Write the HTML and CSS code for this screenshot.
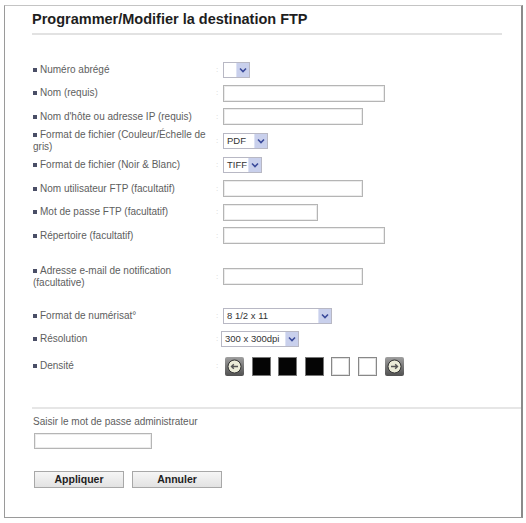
FILE: index.html
```html
<!DOCTYPE html>
<html lang="fr">
<head>
<meta charset="utf-8">
<title>Programmer/Modifier la destination FTP</title>
<link rel="stylesheet" href="styles.css">
</head>
<body>
<div class="frame">
  <h1 class="title">Programmer/Modifier la destination FTP</h1>
  <div class="form">
    <div class="row">
      <div class="label"><span class="bullet"></span>Numéro abrégé</div>
      <div class="colon">:</div>
      <div class="field"><span class="select w27"><span class="val"></span><span class="arrow"><svg width="8" height="6" viewBox="0 0 8 6"><path d="M1 1.5 L4 4.5 L7 1.5" fill="none" stroke="#3a4a9a" stroke-width="1.6"/></svg></span></span></div>
    </div>
    <div class="row">
      <div class="label"><span class="bullet"></span>Nom (requis)</div>
      <div class="colon">:</div>
      <div class="field"><span class="input w162"></span></div>
    </div>
    <div class="row">
      <div class="label"><span class="bullet"></span>Nom d'hôte ou adresse IP (requis)</div>
      <div class="colon">:</div>
      <div class="field"><span class="input w140"></span></div>
    </div>
    <div class="row tall">
      <div class="label"><span class="bullet"></span>Format de fichier (Couleur/Échelle de gris)</div>
      <div class="colon">:</div>
      <div class="field"><span class="select w45"><span class="val">PDF</span><span class="arrow"><svg width="8" height="6" viewBox="0 0 8 6"><path d="M1 1.5 L4 4.5 L7 1.5" fill="none" stroke="#3a4a9a" stroke-width="1.6"/></svg></span></span></div>
    </div>
    <div class="row">
      <div class="label"><span class="bullet"></span>Format de fichier (Noir &amp; Blanc)</div>
      <div class="colon">:</div>
      <div class="field"><span class="select w39"><span class="val">TIFF</span><span class="arrow"><svg width="8" height="6" viewBox="0 0 8 6"><path d="M1 1.5 L4 4.5 L7 1.5" fill="none" stroke="#3a4a9a" stroke-width="1.6"/></svg></span></span></div>
    </div>
    <div class="row">
      <div class="label"><span class="bullet"></span>Nom utilisateur FTP (facultatif)</div>
      <div class="colon">:</div>
      <div class="field"><span class="input w140"></span></div>
    </div>
    <div class="row">
      <div class="label"><span class="bullet"></span>Mot de passe FTP (facultatif)</div>
      <div class="colon">:</div>
      <div class="field"><span class="input w95"></span></div>
    </div>
    <div class="row">
      <div class="label"><span class="bullet"></span>Répertoire (facultatif)</div>
      <div class="colon">:</div>
      <div class="field"><span class="input w162"></span></div>
    </div>
    <div class="row mail">
      <div class="label"><span class="bullet"></span>Adresse e-mail de notification (facultative)</div>
      <div class="colon">:</div>
      <div class="field"><span class="input w140"></span></div>
    </div>
    <div class="row scan">
      <div class="label"><span class="bullet"></span>Format de numérisat°</div>
      <div class="colon">:</div>
      <div class="field"><span class="select w109"><span class="val">8 1/2 x 11</span><span class="arrow"><svg width="8" height="6" viewBox="0 0 8 6"><path d="M1 1.5 L4 4.5 L7 1.5" fill="none" stroke="#3a4a9a" stroke-width="1.6"/></svg></span></span></div>
    </div>
    <div class="row res">
      <div class="label"><span class="bullet"></span>Résolution</div>
      <div class="colon">:</div>
      <div class="field shift"><span class="select w78"><span class="val">300 x 300dpi</span><span class="arrow"><svg width="8" height="6" viewBox="0 0 8 6"><path d="M1 1.5 L4 4.5 L7 1.5" fill="none" stroke="#3a4a9a" stroke-width="1.6"/></svg></span></span></div>
    </div>
    <div class="row dens">
      <div class="label"><span class="bullet"></span>Densité</div>
      <div class="colon">:</div>
      <div class="field density">
        <span class="dbtn"><svg width="19" height="19" viewBox="0 0 19 19"><defs><linearGradient id="g1" x1="0" y1="0" x2="0" y2="1"><stop offset="0" stop-color="#a0a0a0"/><stop offset="1" stop-color="#505050"/></linearGradient></defs><rect x="0" y="0" width="19" height="19" rx="2" fill="url(#g1)"/><circle cx="9.5" cy="9.5" r="6.5" fill="#ebebd8" stroke="#333" stroke-width="1"/><path d="M13 9.5 H6.5 M8.8 7.2 L6.5 9.5 L8.8 11.8" fill="none" stroke="#555" stroke-width="1.4"/></svg></span>
        <span class="dbox black"></span>
        <span class="dbox black"></span>
        <span class="dbox black"></span>
        <span class="dbox white"></span>
        <span class="dbox white"></span>
        <span class="dbtn"><svg width="19" height="19" viewBox="0 0 19 19"><defs><linearGradient id="g2" x1="0" y1="0" x2="0" y2="1"><stop offset="0" stop-color="#a0a0a0"/><stop offset="1" stop-color="#505050"/></linearGradient></defs><rect x="0" y="0" width="19" height="19" rx="2" fill="url(#g2)"/><circle cx="9.5" cy="9.5" r="6.5" fill="#ebebd8" stroke="#333" stroke-width="1"/><path d="M6 9.5 H12.5 M10.2 7.2 L12.5 9.5 L10.2 11.8" fill="none" stroke="#555" stroke-width="1.4"/></svg></span>
      </div>
    </div>
  </div>
  <div class="admin">
    <div class="admin-label">Saisir le mot de passe administrateur</div>
    <span class="input w118"></span>
    <div class="buttons">
      <span class="btn">Appliquer</span>
      <span class="btn">Annuler</span>
    </div>
  </div>
</div>
</body>
</html>
```

FILE: styles.css
```css
html, body {
  margin: 0;
  padding: 0;
  background: #fff;
}
body {
  font-family: "Liberation Sans", Arial, sans-serif;
  color: #555;
}
.frame {
  margin: 5px 3px 3px 4px;
  height: 513px;
  border: 1px solid #9a9a9a;
  border-right: 2px solid #8a8a8a;
  border-top-color: #c4c4c4;
  box-sizing: border-box;
}
.title {
  margin: 5px 19px 0 27px;
  padding: 0 0 5px 0;
  font-size: 14.5px;
  line-height: 17px;
  font-weight: bold;
  color: #1e1e1e;
  border-bottom: 2px solid #e2e2e2;
}
.form {
  margin: 23px 0 0 28px;
  font-size: 10px;
  line-height: 12px;
}
.row {
  display: flex;
  align-items: center;
  height: 23.5px;
}
.row.tall { height: 25px; }
.row.mail { margin-top: 17px; height: 24px; }
.row.scan { margin-top: 16px; }
.row.res { height: 22px; }
.row.dens { margin-top: 3px; height: 26px; }
.label {
  width: 183px;
  flex: none;
  color: #5e5e5e;
  padding-right: 2px;
  box-sizing: border-box;
}
.bullet {
  display: inline-block;
  width: 4px;
  height: 4px;
  background: #4a4e66;
  margin-right: 3px;
  vertical-align: 1px;
}
.colon {
  width: 7px;
  flex: none;
  color: #d4d4d4;
  font-size: 8px;
}
.field {
  flex: none;
  display: flex;
  align-items: center;
}
.field.shift { margin-left: -2px; }
.input {
  display: block;
  height: 17px;
  box-sizing: border-box;
  border: 1px solid #b5b5b5;
  box-shadow: inset 0 0 0 1px #ececec;
  background: #fff;
}
.w162 { width: 162px; }
.w140 { width: 140px; }
.w95 { width: 95px; }
.w118 { width: 118px; }
.select {
  display: flex;
  height: 16px;
  box-sizing: border-box;
  border: 1px solid #b8b8c4;
  background: #fff;
  font-size: 9.5px;
  color: #333;
}
.select .val {
  flex: 1;
  padding-left: 3px;
  line-height: 14px;
  white-space: nowrap;
  overflow: hidden;
}
.select .arrow {
  width: 12px;
  flex: none;
  display: flex;
  align-items: center;
  justify-content: center;
  background: #c9d0ec;
  border-left: 1px solid #dde2f4;
}
.w27 { width: 27px; }
.w45 { width: 45px; }
.w39 { width: 39px; }
.w109 { width: 109px; }
.w78 { width: 78px; }
.density {
  gap: 7.6px;
  margin-left: 2px;
}
.dbtn {
  display: block;
  width: 19px;
  height: 19px;
}
.dbtn svg { display: block; }
.dbox {
  display: block;
  width: 19px;
  height: 19px;
  box-sizing: border-box;
}
.dbox.black {
  background: #050505;
  border: 1px solid #777;
}
.dbox.white {
  background: #fff;
  border: 1px solid #888;
  box-shadow: inset 0 0 0 1px #e0e0e0;
}
.admin {
  margin-top: 28px;
  border-top: 2px solid #e6e6e6;
  margin-left: 27px;
  padding: 7px 0 0 1px;
  font-size: 10px;
  line-height: 12px;
}
.admin-label {
  color: #5e5e5e;
  margin-bottom: 5px;
}
.admin .input {
  margin-left: 1px;
  height: 16px;
}
.buttons {
  display: flex;
  gap: 8px;
  margin-top: 22px;
  margin-left: 1px;
}
.btn {
  display: block;
  width: 90px;
  height: 17px;
  box-sizing: border-box;
  border: 1px solid #a8a8a8;
  background: linear-gradient(#f6f6f6, #e2e2e2);
  text-align: center;
  font-size: 10.5px;
  font-weight: bold;
  line-height: 15px;
  color: #1e1e1e;
}
```
